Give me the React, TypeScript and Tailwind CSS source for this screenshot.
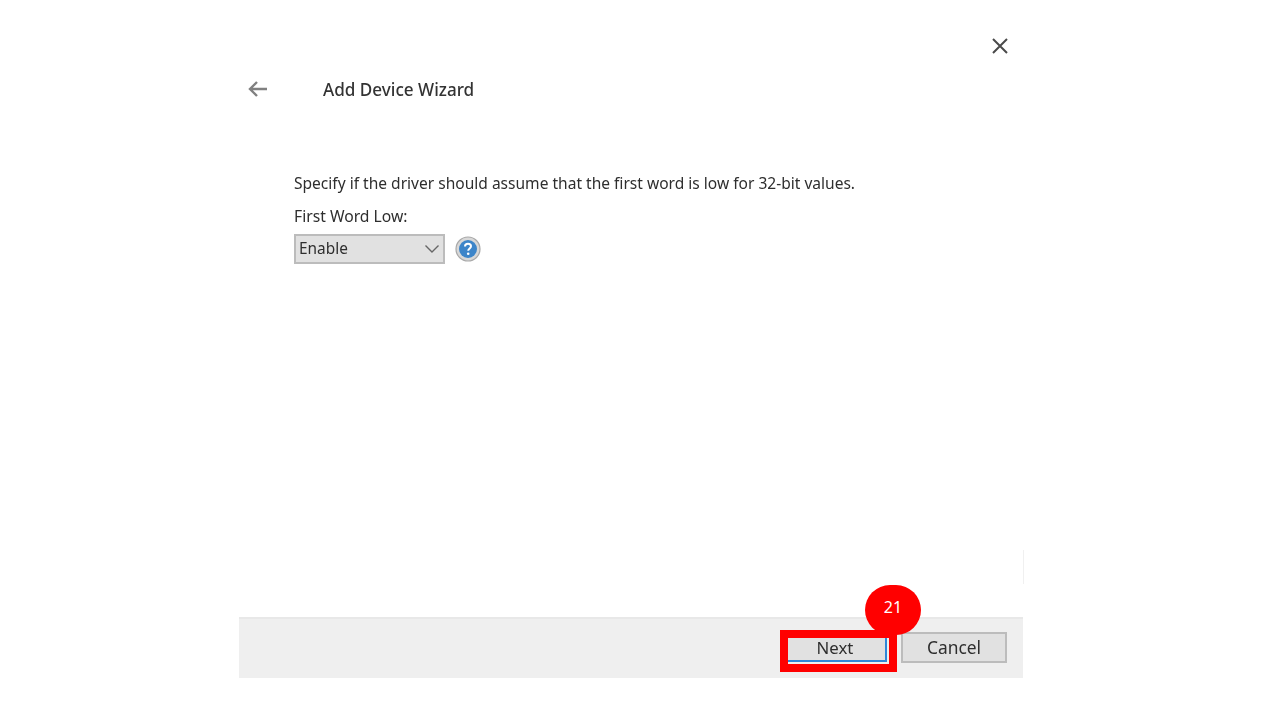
import React from 'react';

const App: React.FC = () => {
  return (
    <div className="w-[1280px] h-[720px] bg-white overflow-hidden pl-[239px] font-['Noto_Sans',sans-serif]">
      <div className="w-[784px] h-[678px] flex flex-col">
        {/* close */}
        <div className="h-[66px] flex justify-end items-end pr-[14px] pb-[11px] shrink-0">
          <svg width="18" height="18" viewBox="0 0 18 18" className="text-[#4a4a4a] blur-[0.4px]">
            <path d="M2 2L16 16M16 2L2 16" stroke="currentColor" strokeWidth="2" fill="none" />
          </svg>
        </div>

        {/* title row */}
        <div className="h-[46px] flex items-center pl-[8px] shrink-0">
          <svg width="21" height="18" viewBox="0 0 21 18" className="text-[#808080] blur-[0.5px]">
            <path d="M20 9H3M10 2L3 9L10 16" stroke="currentColor" strokeWidth="2.4" fill="none" />
          </svg>
          <span className="inline-block ml-[55px] mt-[2px] text-[17.1px] leading-[22px] font-medium text-[#333] blur-[0.5px]">Add Device Wizard</span>
        </div>

        {/* body */}
        <div className="flex-1 relative pl-[55px] pt-[60px] text-[#2e2e2e]">
          <p className="text-[15.55px] leading-[22px] whitespace-nowrap blur-[0.5px]">
            Specify if the driver should assume that the first word is low for 32-bit values.
          </p>
          <p className="mt-[12px] text-[15.7px] leading-[20px] blur-[0.5px]">First Word Low:</p>
          <div className="mt-[8px] flex items-center">
            <div className="w-[151px] h-[30px] bg-[#e1e1e1] border-2 border-[#bcbcbc] flex items-center justify-between pl-[3px] pr-[3px] text-[15.4px] text-[#2e2e2e]">
              <span className="inline-block blur-[0.5px]">Enable</span>
              <svg width="16" height="10" viewBox="0 0 16 10" className="text-[#666] blur-[0.3px]">
                <path d="M1.5 1.5L8 8L14.5 1.5" stroke="currentColor" strokeWidth="1.4" fill="none" />
              </svg>
            </div>
            <svg width="26" height="26" viewBox="0 0 26 26" className="ml-[10px] blur-[0.4px]">
              <circle cx="13" cy="13" r="12" fill="#d8d8d8" stroke="#a9a9a9" strokeWidth="1.2" />
              <circle cx="13" cy="13" r="9" fill="#3d85c9" />
              <path d="M10 10.5C10 8.6 11.3 7.8 13 7.8C14.8 7.8 16 8.8 16 10.3C16 12.4 13.2 12.5 13.2 14.8" stroke="#fff" strokeWidth="2" fill="none" />
              <circle cx="13.2" cy="17.8" r="1.3" fill="#fff" />
            </svg>
          </div>
          <div className="absolute -right-px top-[438px] w-px h-[34px] bg-[#f0f0f0]"></div>
        </div>

        {/* footer */}
        <div className="h-[61px] shrink-0 bg-[#efefef] border-t-2 border-[#e8e8e8] flex justify-end items-start pt-[13px] pr-[16px] gap-[14px]">
          <div className="relative">
            <button className="mt-[2px] w-[100px] h-[28px] bg-[#e1e1e1] text-[16.8px] text-[#2e2e2e] border-r-2 border-b-2 border-[#2f86d8] flex items-center justify-center pr-[2px] pt-[1px]">
              <span className="inline-block blur-[0.5px]">Next</span>
            </button>
            <div className="absolute -left-[7px] -top-[2px] w-[117px] h-[42px] border-[8px] border-[#ff0000]"></div>
            <div className="absolute left-[78px] -top-[47px] w-[56px] h-[50px] rounded-full bg-[#ff0000] text-white text-[16px] pb-[6px] flex items-center justify-center">
              21
            </div>
          </div>
          <button className="w-[106px] h-[31px] bg-[#e1e1e1] border-2 border-[#bcbcbc] text-[17.4px] text-[#2e2e2e] flex items-center justify-center">
            <span className="inline-block blur-[0.5px]">Cancel</span>
          </button>
        </div>
      </div>
    </div>
  );
};

export default App;
